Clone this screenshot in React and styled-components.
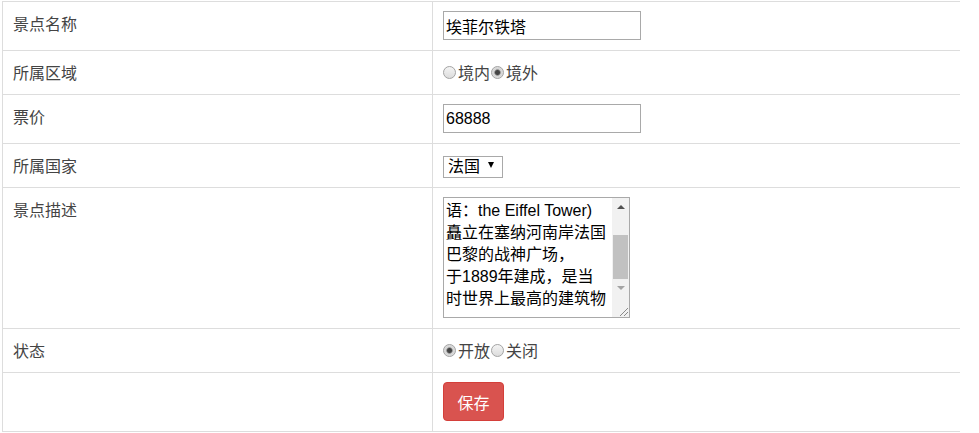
import styled, { createGlobalStyle } from 'styled-components';

const GlobalStyle = createGlobalStyle`
  html, body {
    margin: 0;
    background: #fff;
  }
  body {
    font-family: "Noto Sans CJK SC", "Liberation Sans", sans-serif;
    font-size: 16px;
    color: #444;
  }
`;

const Page = styled.div`
  padding: 1px 0 0 2px;
`;

const Table = styled.table`
  width: 958px;
  border-collapse: collapse;
  table-layout: fixed;
`;

const Cell = styled.td`
  padding: 10px;
  height: ${(p) => p.$h || 23}px;
  box-sizing: content-box;
  line-height: 23px;
  vertical-align: top;
  border-top: 1px solid #ddd;
  border-bottom: 1px solid #ddd;
  border-left: 1px solid #ddd;
  ${(p) => p.$label && 'width: 409px;'}
`;

const TextInput = styled.input`
  display: block;
  box-sizing: border-box;
  width: 198px;
  height: 29px;
  margin: -1px 0 0;
  padding: 1px 2px;
  border: 1px solid #a9a9a9;
  font: 16px "Liberation Sans", "Noto Sans CJK SC", sans-serif;
  color: #000;
  outline: none;
`;

const RadioGroup = styled.div`
  display: flex;
  align-items: center;
  height: 23px;
  color: #444;
`;

const RadioLabel = styled.label`
  display: flex;
  align-items: center;
`;

const Radio = styled.input`
  appearance: none;
  width: 13px;
  height: 13px;
  margin: 0 2px 0 ${(p) => (p.$first ? '0' : '1px')};
  border: 1px solid #a4a4a4;
  border-radius: 50%;
  box-sizing: border-box;
  background: linear-gradient(#f4f4f4, #dcdcdc);
  &:checked {
    background: radial-gradient(circle, #444 0 2px, #8a8a8a 2.8px, #d4d4d4 3.6px, #e6e6e6);
  }
`;

const SelectBox = styled.span`
  position: relative;
  display: block;
  width: 60px;
  height: 22px;
`;

const Select = styled.select`
  appearance: none;
  box-sizing: border-box;
  width: 60px;
  height: 22px;
  margin: 0;
  padding: 0 0 0 4px;
  border: 1px solid #a9a9a9;
  background: #fff;
  font: 16px "Liberation Sans", "Noto Sans CJK SC", sans-serif;
  line-height: 20px;
  color: #000;
  border-radius: 0;
`;

const SelectArrow = styled.span`
  position: absolute;
  left: 45px;
  top: 8px;
  width: 0;
  height: 0;
  border-left: 3.5px solid transparent;
  border-right: 3.5px solid transparent;
  border-top: 6px solid #000;
  pointer-events: none;
`;

const AreaBox = styled.div`
  display: flex;
  box-sizing: border-box;
  width: 187px;
  height: 121px;
  margin-top: -1px;
  border: 1px solid #a9a9a9;
  background: #fff;
`;

const Area = styled.textarea`
  flex: 1;
  box-sizing: border-box;
  margin: 0;
  padding: 2px;
  border: none;
  outline: none;
  resize: none;
  overflow: hidden;
  font: 16px "Liberation Sans", "Noto Sans CJK SC", sans-serif;
  line-height: 22px;
  color: #000;
`;

const Rail = styled.div`
  width: 17px;
  display: flex;
  flex-direction: column;
  background: #f1f1f1;
`;

const RailButton = styled.div`
  height: 17px;
  display: flex;
  align-items: center;
  justify-content: center;
  &::after {
    content: '';
    width: 0;
    height: 0;
    border-left: 4px solid transparent;
    border-right: 4px solid transparent;
    ${(p) =>
      p.$down
        ? 'border-top: 4px solid #a3a3a3;'
        : 'border-bottom: 4px solid #505050;'}
  }
`;

const Track = styled.div`
  height: 64px;
  padding: 20px 1px 0;
  box-sizing: border-box;
`;

const Thumb = styled.div`
  height: 44px;
  background: #c1c1c1;
`;

const Corner = styled.div`
  flex: 1;
  display: flex;
  align-items: flex-end;
  justify-content: flex-end;
`;

const SaveButton = styled.button`
  display: block;
  width: 61px;
  height: 39px;
  margin: -1px 0 0;
  padding: 0;
  border: 1px solid #d43f3a;
  border-radius: 4px;
  background: #d9534f;
  color: #fff;
  font: 16px "Liberation Sans", "Noto Sans CJK SC", sans-serif;
  cursor: pointer;
`;

const description =
  '埃菲尔铁塔（法语：La\nTour Eiffel；英\n语：the Eiffel Tower)\n矗立在塞纳河南岸法国\n巴黎的战神广场，\n于1889年建成，是当\n时世界上最高的建筑物\n。';

export default function App() {
  return (
    <Page>
      <GlobalStyle />
      <Table>
        <tbody>
          <tr>
            <Cell $label $h={28}>景点名称</Cell>
            <Cell $h={28}>
              <TextInput defaultValue="埃菲尔铁塔" />
            </Cell>
          </tr>
          <tr>
            <Cell $label>所属区域</Cell>
            <Cell>
              <RadioGroup>
                <RadioLabel>
                  <Radio type="radio" name="area" $first />境内
                </RadioLabel>
                <RadioLabel>
                  <Radio type="radio" name="area" defaultChecked />境外
                </RadioLabel>
              </RadioGroup>
            </Cell>
          </tr>
          <tr>
            <Cell $label $h={28}>票价</Cell>
            <Cell $h={28}>
              <TextInput defaultValue="68888" />
            </Cell>
          </tr>
          <tr>
            <Cell $label>所属国家</Cell>
            <Cell>
              <SelectBox>
                <Select defaultValue="fr">
                  <option value="fr">法国</option>
                  <option value="cn">中国</option>
                </Select>
                <SelectArrow />
              </SelectBox>
            </Cell>
          </tr>
          <tr>
            <Cell $label $h={120}>景点描述</Cell>
            <Cell $h={120}>
              <AreaBox>
                <Area
                  defaultValue={description}
                  ref={(el) => {
                    if (el) el.scrollTop = 44;
                  }}
                />
                <Rail>
                  <RailButton />
                  <Track>
                    <Thumb />
                  </Track>
                  <RailButton $down />
                  <Corner>
                    <svg width="12" height="12" viewBox="0 0 12 12">
                      <path d="M11 3 L3 11 M11 7 L7 11" stroke="#8a8a8a" strokeWidth="1" />
                    </svg>
                  </Corner>
                </Rail>
              </AreaBox>
            </Cell>
          </tr>
          <tr>
            <Cell $label>状态</Cell>
            <Cell>
              <RadioGroup>
                <RadioLabel>
                  <Radio type="radio" name="status" $first defaultChecked />开放
                </RadioLabel>
                <RadioLabel>
                  <Radio type="radio" name="status" />关闭
                </RadioLabel>
              </RadioGroup>
            </Cell>
          </tr>
          <tr>
            <Cell $label $h={38} />
            <Cell $h={38}>
              <SaveButton>保存</SaveButton>
            </Cell>
          </tr>
        </tbody>
      </Table>
    </Page>
  );
}
